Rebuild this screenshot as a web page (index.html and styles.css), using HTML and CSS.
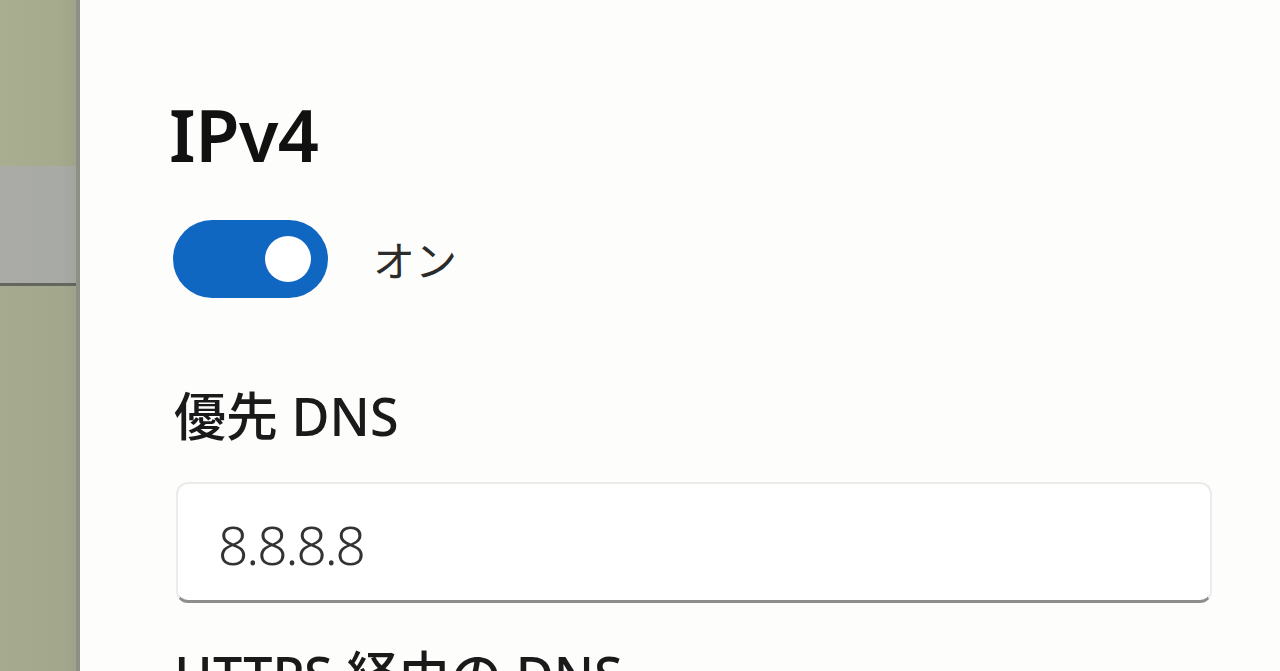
FILE: index.html
```html
<!DOCTYPE html>
<html lang="ja">
<head>
<meta charset="utf-8">
<title>IPv4</title>
<link rel="stylesheet" href="styles.css">
</head>
<body>
<div class="window">
  <aside class="sidebar">
    <div class="side-top"></div>
    <div class="side-band"></div>
    <div class="side-bottom"></div>
  </aside>
  <main class="panel">
    <h1 class="title">IPv4</h1>
    <div class="toggle-row">
      <div class="toggle"><span class="knob"></span></div>
      <span class="toggle-label">オン</span>
    </div>
    <div class="label">優先 DNS</div>
    <div class="input"><span class="value">8.8.8.8</span></div>
    <div class="label label-next">HTTPS 経由の DNS</div>
  </main>
</div>
</body>
</html>
```
FILE: styles.css
```css
html, body {
  margin: 0;
  padding: 0;
  height: 100%;
  overflow: hidden;
}
body {
  background: #fdfdfb;
  font-family: "Noto Sans", "Noto Sans CJK JP", sans-serif;
  color: #1b1b1b;
}
.window {
  display: flex;
  height: 671px;
  overflow: hidden;
}
.sidebar {
  width: 76px;
  flex: none;
  display: flex;
  flex-direction: column;
  border-right: 4px solid #8e9086;
}
.side-top {
  height: 166px;
  background: linear-gradient(90deg, #a9ae91, #a5aa8c 80%, #9fa388);
}
.side-band {
  height: 117px;
  background: linear-gradient(90deg, #aaaba6, #a8aaa5 80%, #a2a49f);
  border-bottom: 3px solid #63665e;
}
.side-bottom {
  flex: 1;
  background: linear-gradient(90deg, #a6ab90, #a3a88d 80%, #9ea289);
}
.panel {
  flex: 1;
  padding: 98px 68px 0 89px;
  display: flex;
  flex-direction: column;
  align-items: flex-start;
}
.panel > * {
  flex-shrink: 0;
}
.title {
  margin: 0;
  font-size: 72px;
  line-height: 72px;
  font-weight: 600;
  color: #111;
  letter-spacing: -0.5px;
}
.toggle-row {
  margin-top: 50px;
  display: flex;
  align-items: center;
  gap: 45px;
}
.toggle {
  width: 155px;
  height: 78px;
  border-radius: 39px;
  background: #1067c1;
  display: flex;
  align-items: center;
  justify-content: flex-end;
  padding-right: 17px;
  box-sizing: border-box;
  margin-left: 4px;
}
.knob {
  width: 46px;
  height: 46px;
  border-radius: 50%;
  background: #fff;
}
.toggle-label {
  font-family: "Noto Sans CJK JP", sans-serif;
  font-size: 42px;
  font-weight: 400;
  color: #2b2b2b;
  line-height: 1;
}
.label {
  margin-top: 92px;
  font-size: 52px;
  line-height: 52px;
  font-weight: 500;
  color: #1a1a1a;
  margin-left: 5px;
  white-space: nowrap;
}
.input {
  margin-top: 40px;
  margin-left: 7px;
  align-self: stretch;
  height: 121px;
  box-sizing: border-box;
  background: #fff;
  border: 2px solid #ebebea;
  border-bottom: 3px solid #8e8e8e;
  border-radius: 12px;
  display: flex;
  align-items: center;
  padding-left: 40px;
}
.value {
  font-size: 53px;
  line-height: 1;
  font-weight: 300;
  color: #333;
  letter-spacing: -2px;
  padding-top: 4px;
}
.label-next {
  margin-top: 46px;
}
```
